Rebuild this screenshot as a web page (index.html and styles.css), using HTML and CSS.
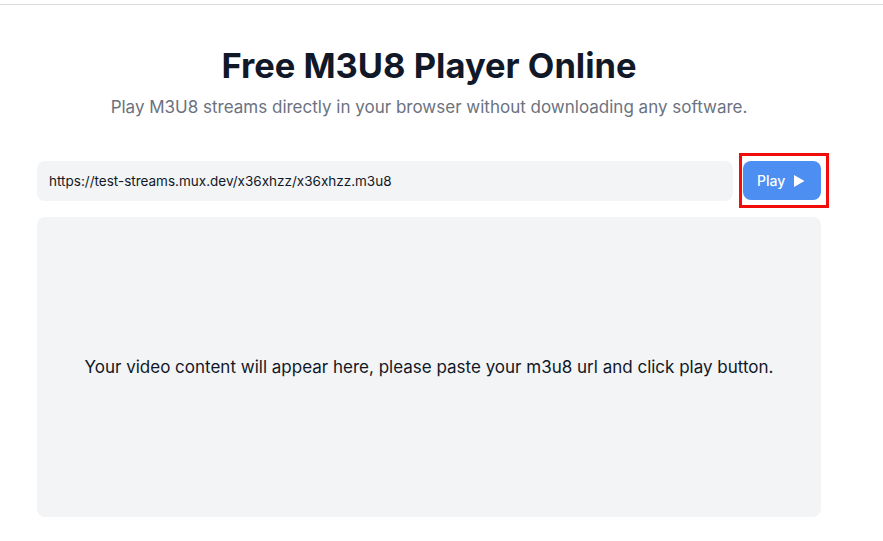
FILE: index.html
```html
<!DOCTYPE html>
<html lang="en">
<head>
    <meta charset="UTF-8">
    <meta name="viewport" content="width=device-width, initial-scale=1.0">
    <title>Free M3U8 Player Online</title>
    <link rel="stylesheet" href="styles.css">
</head>
<body>
    <!-- thin header strip at the very top -->
    <div class="topbar"></div>

    <div class="content">
        <h1>Free M3U8 Player Online</h1>
        <p class="subtitle">Play M3U8 streams directly in your browser without downloading any software.</p>

        <!-- url input and play button -->
        <div class="player-controls">
            <input type="text" class="url-input" value="https://test-streams.mux.dev/x36xhzz/x36xhzz.m3u8">
            <div class="play-wrap">
                <button class="play-button">
                    Play
                    <svg width="12" height="14" viewBox="0 0 12 14"><path d="M1 1 L11.5 7 L1 13 Z" fill="#fff"/></svg>
                </button>
            </div>
        </div>

        <!-- placeholder for the video -->
        <div class="video-box">
            <p>Your video content will appear here, please paste your m3u8 url and click play button.</p>
        </div>
    </div>
</body>
</html>
```

FILE: styles.css
```css
/* base page */
body {
    margin: 0;
    font-family: Inter, "Noto Sans", Arial, sans-serif;
    color: #111827;
    background: #fff;
}

.topbar {
    height: 4px;
    border-bottom: 1px solid #dcdcdc;
}

/* main content column */
.content {
    width: 784px;
    margin-left: 37px;
}

h1 {
    margin: 40px 0 0;
    font-size: 34.5px;
    line-height: 42px;
    font-weight: 700;
    text-align: center;
    color: #111827;
}

.subtitle {
    margin: 6px 0 0;
    font-size: 17px;
    line-height: 28px;
    text-align: center;
    color: #6b7280;
}

/* input row */
.player-controls {
    display: flex;
    gap: 10px;
    margin-top: 40px;
}

.url-input {
    flex: 1;
    height: 40px;
    box-sizing: border-box;
    padding: 0 12px;
    border: none;
    border-radius: 8px;
    background-color: #f3f4f6;
    font-family: inherit;
    font-size: 13.5px;
    color: #111827;
    outline: none;
}

.play-wrap {
    position: relative;
}

/* red highlight drawn over the button */
.play-wrap::after {
    content: "";
    position: absolute;
    top: -8px;
    left: -4px;
    right: -8px;
    bottom: -7px;
    border: 3px solid #f20d0d;
    pointer-events: none;
}

.play-button {
    display: flex;
    align-items: center;
    gap: 8px;
    width: 78px;
    height: 39px;
    padding: 0 0 0 14px;
    border: none;
    border-radius: 8px;
    background-color: #4c8ef2;
    color: #fff;
    font-family: inherit;
    font-size: 14px;
    font-weight: 500;
    cursor: pointer;
}

/* video placeholder */
.video-box {
    display: flex;
    align-items: center;
    justify-content: center;
    height: 300px;
    margin-top: 16px;
    border-radius: 8px;
    background-color: #f3f4f6;
}

.video-box p {
    margin: 0;
    font-size: 17px;
    color: #111827;
}
```
